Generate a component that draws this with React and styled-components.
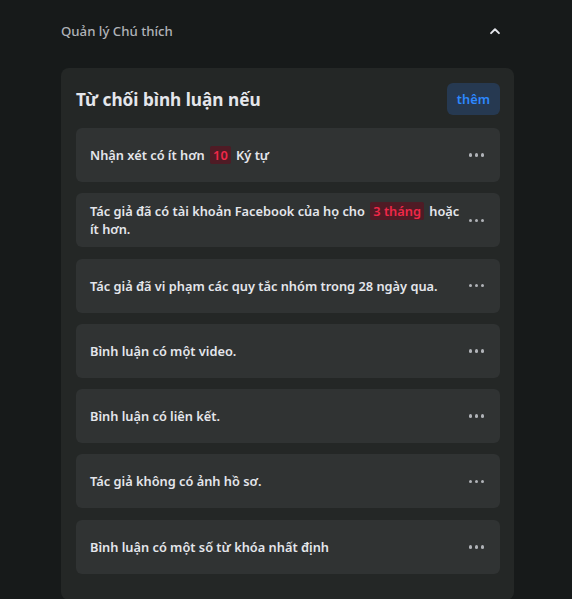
import React from "react";
import styled, { createGlobalStyle } from "styled-components";

// --------------------------------------------------

const GlobalStyle = createGlobalStyle`
	html, body {
		margin: 0;
		padding: 0;
		background: #171a1a;
	}

	body {
		font-family: "Noto Sans", "Open Sans", sans-serif;
		-webkit-font-smoothing: antialiased;
	}
`;

const Page = styled.div`
	min-height: 599px;
	background: #171a1a;
	padding: 16px 58px 0 61px;
	box-sizing: border-box;
`;

const SectionHeader = styled.div`
	display: flex;
	align-items: center;
	justify-content: space-between;
	height: 30px;
	padding-right: 12px;
	color: #b0b3b8;
	font-size: 13.2px;
	font-weight: 500;
`;

const Chevron = styled.svg`
	width: 14px;
	height: 14px;
	color: #e4e6eb;
`;

const Card = styled.div`
	margin-top: 22px;
	background: #242726;
	border-radius: 8px;
	padding: 15px 14px 26px 15px;
`;

const CardHead = styled.div`
	display: flex;
	align-items: center;
	justify-content: space-between;
	margin-bottom: 13px;
`;

const Title = styled.h2`
	margin: 0;
	color: #e4e6eb;
	font-size: 17.2px;
	font-weight: 700;
`;

const AddButton = styled.button`
	border: 0;
	border-radius: 6px;
	background: #263951;
	color: #2d88ff;
	font-family: inherit;
	font-size: 12.8px;
	font-weight: 600;
	height: 32px;
	padding: 0 10px;
`;

const RuleList = styled.div`
	display: flex;
	flex-direction: column;
	gap: 11.3px;
`;

const Rule = styled.div`
	display: flex;
	align-items: center;
	justify-content: space-between;
	min-height: 54px;
	box-sizing: border-box;
	padding: 9px 16px 9px 14px;
	background: #303333;
	border-radius: 6px;
	color: #e4e6eb;
	font-size: 12.8px;
	font-weight: 600;
	line-height: 18px;
`;

const RuleText = styled.div`
	max-width: 374px;
`;

const Highlight = styled.span`
	background: #4f1b25;
	color: #f02849;
	padding: 0 3px;
	margin: 0 2px;
	border-radius: 2px;
`;

const More = styled.div`
	display: flex;
	gap: 2.5px;

	span {
		width: 3.5px;
		height: 3.5px;
		border-radius: 50%;
		background: #b0b3b8;
	}
`;

// --------------------------------------------------

const rules = [
	<>Nhận xét có ít hơn <Highlight>10</Highlight> Ký tự</>,
	<>Tác giả đã có tài khoản Facebook của họ cho <Highlight>3 tháng</Highlight> hoặc<br />ít hơn.</>,
	<>Tác giả đã vi phạm các quy tắc nhóm trong 28 ngày qua.</>,
	<>Bình luận có một video.</>,
	<>Bình luận có liên kết.</>,
	<>Tác giả không có ảnh hồ sơ.</>,
	<>Bình luận có một số từ khóa nhất định</>,
];

const App = () =>
	<>
		<GlobalStyle />
		<Page>
			<SectionHeader>
				<span>Quản lý Chú thích</span>
				<Chevron viewBox="0 0 16 16">
					<path d="M3.5 10.5 8 6l4.5 4.5" fill="none" stroke="currentColor" strokeWidth="2.2" strokeLinecap="round" strokeLinejoin="round" />
				</Chevron>
			</SectionHeader>

			<Card>
				<CardHead>
					<Title>Từ chối bình luận nếu</Title>
					<AddButton>thêm</AddButton>
				</CardHead>

				<RuleList>
					{rules.map((text, i) =>
						<Rule key={i}>
							<RuleText>{text}</RuleText>
							<More><span /><span /><span /></More>
						</Rule>,
					)}
				</RuleList>
			</Card>
		</Page>
	</>;

export default App;
